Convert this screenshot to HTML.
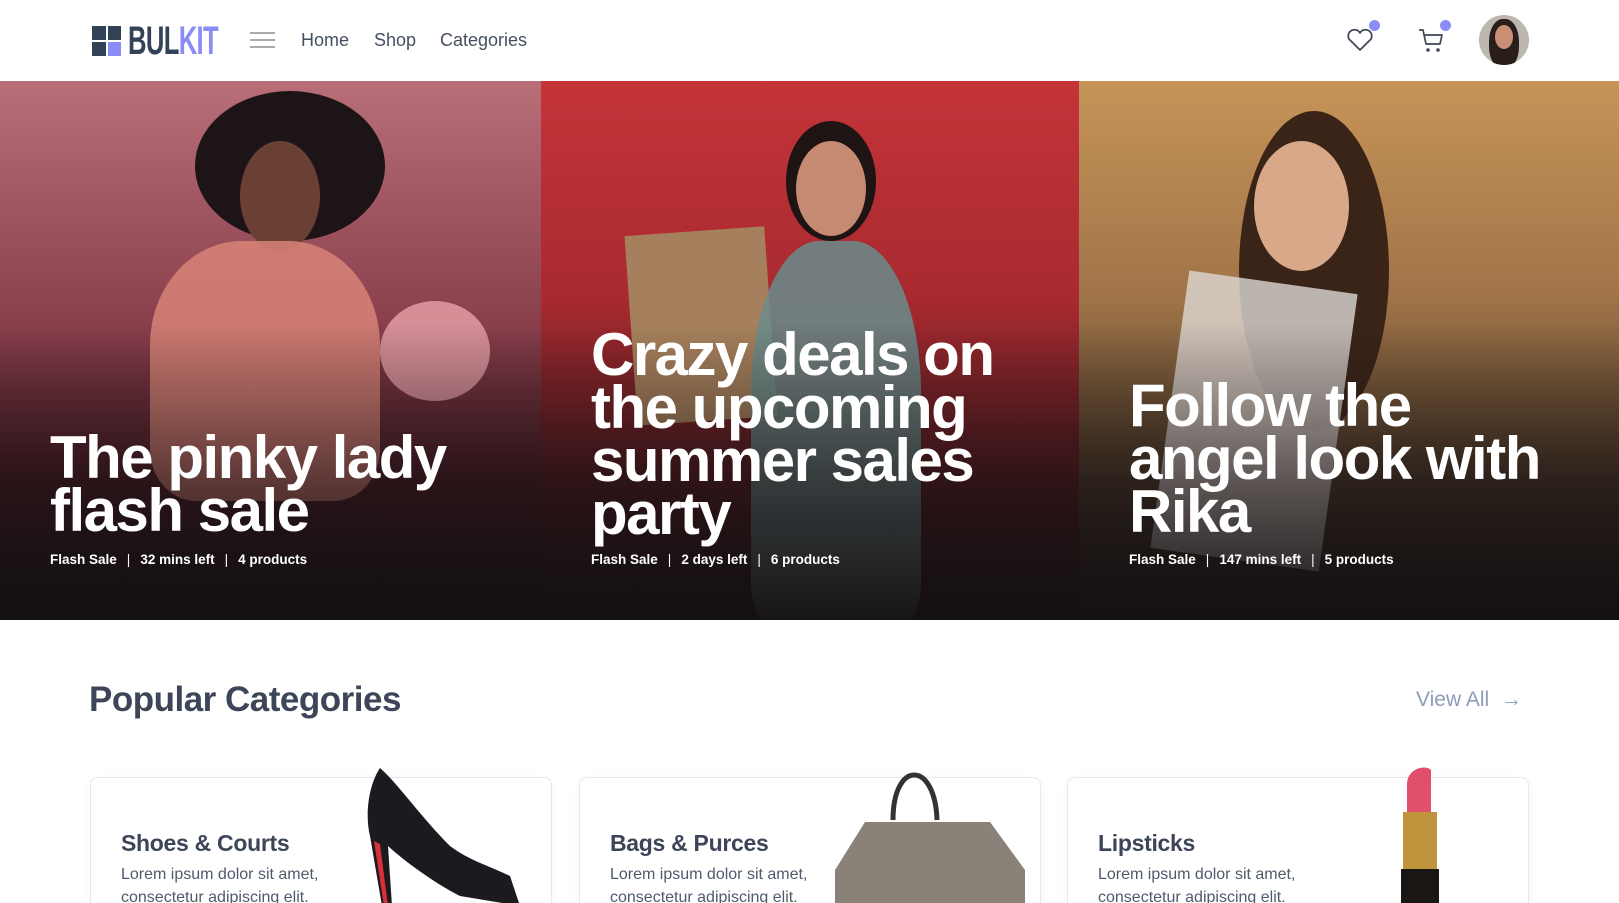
<!DOCTYPE html>
<html style="height:903px;overflow:hidden"><head><meta charset="utf-8"><style>
*{margin:0;padding:0;box-sizing:border-box}
body{width:1619px;height:903px;overflow:hidden;background:#fff;font-family:"Liberation Sans",sans-serif;position:relative}
.hdr{position:absolute;left:0;top:0;width:1619px;height:81px;background:#fff}
.nav a{position:absolute;top:30px;font-size:18px;color:#444f60;text-decoration:none}
.hero{position:absolute;top:81px;height:539px;overflow:hidden}
.hero h2{position:absolute;left:50px;color:#fff;font-size:60px;line-height:53px;font-weight:bold;letter-spacing:-1.5px;z-index:2}
.meta{position:absolute;left:50px;top:552px;color:#fff;font-size:13.5px;font-weight:bold;z-index:2}
.meta span{margin:0 10px;font-weight:normal}
.blob{position:absolute;border-radius:50%}
.shade{position:absolute;left:0;top:0;width:100%;height:100%;background:linear-gradient(180deg,transparent 45%,rgba(20,14,16,.6) 75%,rgba(20,16,18,.95) 100%)}
.card{position:absolute;top:777px;width:462px;height:126px;border:1px solid #e3e8ef;border-bottom:none;border-radius:8px 8px 0 0;background:#fff;box-shadow:0 2px 10px rgba(0,0,0,.04)}
.card h3{position:absolute;left:30px;top:52px;font-size:23px;color:#3d4658;font-weight:bold;letter-spacing:-.3px}
.card p{position:absolute;left:30px;top:85px;font-size:16px;line-height:23px;color:#4f5a6b}
</style></head><body>
<div class="hdr">
<div style="position:absolute;left:92px;top:26px;width:14px;height:14px;background:#344258"></div>
<div style="position:absolute;left:108px;top:26px;width:13px;height:14px;background:#344258"></div>
<div style="position:absolute;left:92px;top:42px;width:14px;height:14px;background:#344258"></div>
<div style="position:absolute;left:108px;top:42px;width:13px;height:14px;background:#8c8cf7"></div>
<div style="position:absolute;left:128px;top:20px;font-size:40px;font-weight:bold;letter-spacing:-1px;transform:scaleX(.64);transform-origin:left;color:#344258;line-height:42px">BUL<span style="color:#8c8cf7">KIT</span></div>
<div style="position:absolute;left:250px;top:32px;width:25px;height:2px;background:#aaa"></div>
<div style="position:absolute;left:250px;top:39px;width:25px;height:2px;background:#aaa"></div>
<div style="position:absolute;left:250px;top:46px;width:25px;height:2px;background:#aaa"></div>
<div class="nav"><a style="left:301px">Home</a><a style="left:374px">Shop</a><a style="left:440px">Categories</a></div>
<svg style="position:absolute;left:1346px;top:28px" width="28" height="24" viewBox="0 0 28 24"><path d="M14 22 L3 11 A6 6 0 0 1 14 5 A6 6 0 0 1 25 11 Z" fill="none" stroke="#3d4658" stroke-width="1.7" stroke-linejoin="round"/></svg>
<div style="position:absolute;left:1369px;top:20px;width:11px;height:11px;border-radius:50%;background:#8c8cf7"></div>
<svg style="position:absolute;left:1418px;top:28px" width="28" height="26" viewBox="0 0 28 26"><path d="M1 2 H5 L8 16 H22 L24 7 H6" fill="none" stroke="#3d4658" stroke-width="1.7" stroke-linejoin="round"/><circle cx="10" cy="22" r="1.8" fill="#3d4658"/><circle cx="20" cy="22" r="1.8" fill="#3d4658"/></svg>
<div style="position:absolute;left:1440px;top:20px;width:11px;height:11px;border-radius:50%;background:#8c8cf7"></div>
<div style="position:absolute;left:1479px;top:15px;width:50px;height:50px;border-radius:50%;background:#bdb7b2;overflow:hidden"><div style="position:absolute;left:10px;top:4px;width:30px;height:50px;border-radius:45%;background:#2a1e1a"></div><div style="position:absolute;left:16px;top:10px;width:18px;height:24px;border-radius:50%;background:#c98f74"></div></div>
</div>
<div class="hero" style="left:0;width:541px;background:linear-gradient(180deg,#b86f78 0%,#8a3f4c 45%,#4a1c24 75%,#1c1416 100%)">
<div class="blob" style="left:195px;top:10px;width:190px;height:150px;background:#1c1416"></div>
<div class="blob" style="left:240px;top:60px;width:80px;height:110px;background:#6a4034"></div>
<div style="position:absolute;left:150px;top:160px;width:230px;height:260px;border-radius:40% 40% 20% 20%;background:#d88478;opacity:.85"></div>
<div class="blob" style="left:380px;top:220px;width:110px;height:100px;background:#e8a3aa;opacity:.8"></div>
<div class="shade"></div>
<h2 style="top:350px">The pinky lady<br>flash sale</h2>
<div class="meta" style="top:471px">Flash Sale<span>|</span>32 mins left<span>|</span>4 products</div></div>
<div class="hero" style="left:541px;width:538px;background:linear-gradient(180deg,#c43438 0%,#a82a30 40%,#5a1c20 72%,#1e1618 100%)">
<div class="blob" style="left:245px;top:40px;width:90px;height:120px;background:#1e1414"></div>
<div class="blob" style="left:255px;top:60px;width:70px;height:95px;background:#c58a72"></div>
<div style="position:absolute;left:90px;top:150px;width:140px;height:190px;background:#a6805c;transform:rotate(-4deg)"></div>
<div style="position:absolute;left:210px;top:160px;width:170px;height:380px;border-radius:40% 40% 10% 10%;background:#6a8c8c;opacity:.85"></div>
<div class="shade"></div>
<h2 style="top:247px">Crazy deals on<br>the upcoming<br>summer sales<br>party</h2>
<div class="meta" style="top:471px">Flash Sale<span>|</span>2 days left<span>|</span>6 products</div></div>
<div class="hero" style="left:1079px;width:540px;background:linear-gradient(180deg,#c69458 0%,#a07448 40%,#54402c 72%,#1e1a18 100%)">
<div class="blob" style="left:160px;top:30px;width:150px;height:320px;background:#3a2418"></div>
<div class="blob" style="left:175px;top:60px;width:95px;height:130px;background:#d8a888"></div>
<div style="position:absolute;left:90px;top:200px;width:170px;height:280px;background:#ddd8d4;opacity:.8;transform:rotate(8deg)"></div>
<div class="shade"></div>
<h2 style="top:298px">Follow the<br>angel look with<br>Rika</h2>
<div class="meta" style="top:471px">Flash Sale<span>|</span>147 mins left<span>|</span>5 products</div></div>
<div style="position:absolute;left:89px;top:680px;font-size:35px;font-weight:bold;color:#3d4658;letter-spacing:-.5px">Popular Categories</div>
<div style="position:absolute;left:1416px;top:688px;font-size:21px;color:#8d9cb8">View All &nbsp;→</div>
<div class="card" style="left:90px"><h3>Shoes &amp; Courts</h3><p>Lorem ipsum dolor sit amet,<br>consectetur adipiscing elit.</p></div>
<div class="card" style="left:579px"><h3>Bags &amp; Purces</h3><p>Lorem ipsum dolor sit amet,<br>consectetur adipiscing elit.</p></div>
<div class="card" style="left:1067px"><h3>Lipsticks</h3><p>Lorem ipsum dolor sit amet,<br>consectetur adipiscing elit.</p></div>
<svg style="position:absolute;left:360px;top:766px" width="160" height="140"><path d="M20 2 C8 20 5 50 10 70 L22 140 H32 L28 80 C50 100 80 120 100 130 L160 140 L150 110 C130 100 110 95 90 80 C60 50 40 20 20 2Z" fill="#1c1a1e"/><path d="M14 75 L24 140 H28 L20 78Z" fill="#d8303a"/></svg>
<svg style="position:absolute;left:835px;top:760px" width="190" height="150"><path d="M58 60 C58 0 100 0 102 60" fill="none" stroke="#333" stroke-width="5"/><path d="M30 62 H155 L190 110 V150 H0 V110Z" fill="#8a8278"/></svg>
<svg style="position:absolute;left:1395px;top:764px" width="50" height="140"><path d="M12 20 C12 5 30 0 36 6 V50 H12Z" fill="#e0506a"/><rect x="8" y="48" width="34" height="60" fill="#c0943c"/><rect x="6" y="105" width="38" height="40" fill="#1a1614"/></svg>
</body></html>
